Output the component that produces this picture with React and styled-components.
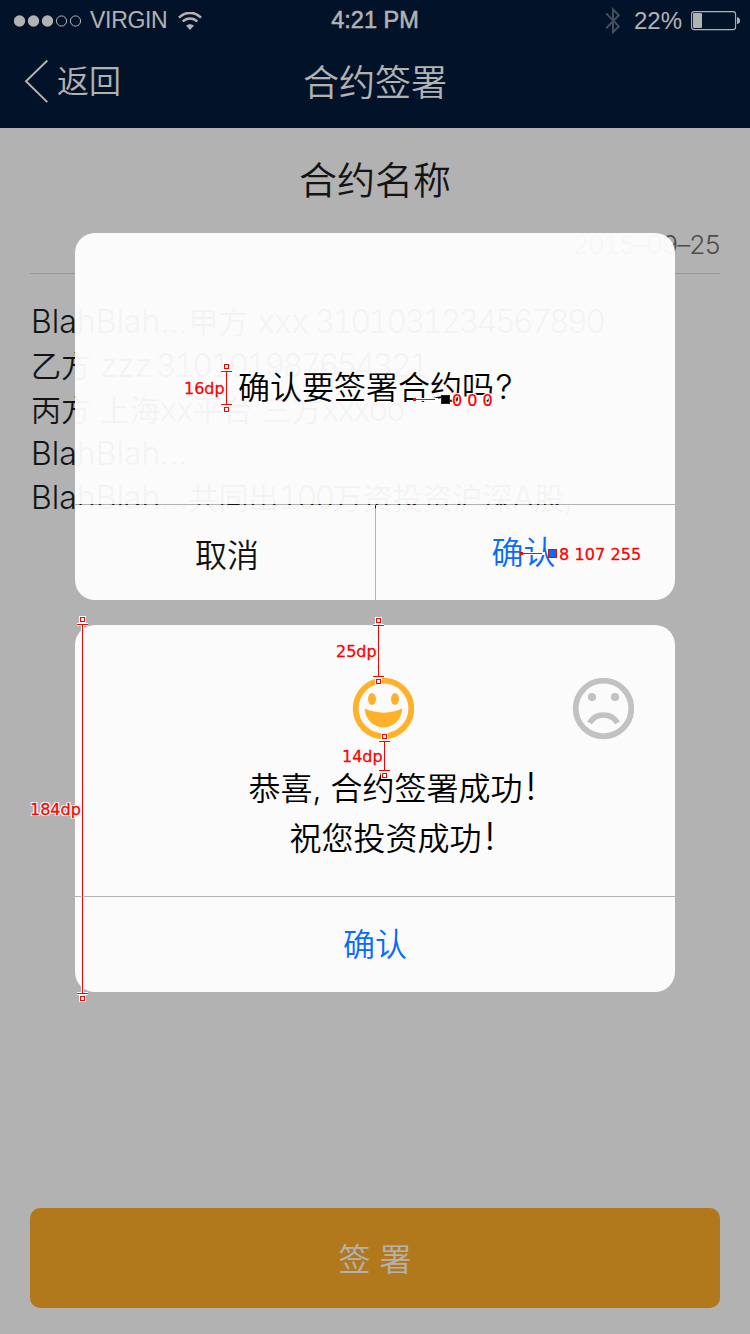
import React from "react";
import styled, { createGlobalStyle } from "styled-components";

const GlobalStyle = createGlobalStyle`
  * { box-sizing: border-box; }
  body { margin: 0; background: #fff; }
  button { border: 0; padding: 0; background: none; font: inherit; }
`;

const Screen = styled.div`
  position: relative;
  width: 750px;
  height: 1334px;
  overflow: hidden;
  background: #fff;
  color: #1e1e1e;
  font-family: Inter, "Noto Sans CJK SC", sans-serif;
  font-weight: 350;
`;

const Page = styled.div`
  height: 100%;
  display: flex;
  flex-direction: column;
`;

const Header = styled.header`
  height: 128px;
  flex: none;
  background: #031a3a;
  color: #fff;
`;

const StatusBar = styled.div`
  height: 41px;
  padding: 0 9px 0 14px;
  display: grid;
  grid-template-columns: 1fr auto 1fr;
  align-items: center;
  font-family: "Liberation Sans", sans-serif;
  font-weight: 400;
  font-size: 24px;
`;

const StatusGroup = styled.div`
  display: flex;
  align-items: center;
  justify-content: ${(p) => (p.$end ? "flex-end" : "flex-start")};
`;

const StatusText = styled.span`
  font-size: ${(p) => p.$size || 24}px;
  letter-spacing: ${(p) => p.$spacing || 0}px;
  line-height: 41px;
  height: 41px;
  margin: ${(p) => p.$margin || 0};
  -webkit-text-stroke: ${(p) => (p.$strong ? "0.5px #fff" : "0")};
`;

const NavBar = styled.div`
  height: 82px;
  padding: 0 24px;
  display: grid;
  grid-template-columns: 1fr auto 1fr;
  align-items: center;
`;

const BackButton = styled.button`
  display: flex;
  align-items: center;
  gap: 9px;
  color: #fff;
  font-size: 32px;
  line-height: 44px;
`;

const NavTitle = styled.h1`
  margin: 0;
  padding-top: 2px;
  font-size: 36px;
  font-weight: 350;
  line-height: 50px;
`;

const Article = styled.main`
  flex: 1;
  padding: 0 30px;
`;

const ContractTitle = styled.h2`
  margin: 24px 0 0;
  font-size: 38px;
  font-weight: 350;
  line-height: 56px;
  text-align: center;
`;

const DateLine = styled.div`
  height: 66px;
  padding-top: 19px;
  border-bottom: 1px solid #dadada;
  color: #6e6e6e;
  font-size: 26px;
  line-height: 36px;
  font-variant-numeric: tabular-nums;
  letter-spacing: -1.3px;
  text-align: right;
`;

const Terms = styled.div`
  padding-top: 26px;
`;

const TermLine = styled.p`
  margin: 0;
  height: 44px;
  padding-left: 1px;
  font-size: 32px;
  line-height: 44px;
  white-space: pre;
`;

const Han = styled.span`
  margin-left: ${(p) => p.$shift || 0}px;
  font-size: 30px;
`;

const Latin = styled.span`
  letter-spacing: ${(p) => p.$spacing}px;
`;

const Digits = styled.span`
  margin-left: ${(p) => p.$shift || 0}px;
  font-variant-numeric: tabular-nums;
  letter-spacing: -2.65px;
`;

const SignButton = styled.button`
  flex: none;
  height: 100px;
  margin: 0 30px 26px;
  padding-bottom: 3px;
  border-radius: 10px;
  background: #ffae29;
  color: #fff;
  font-size: 32px;
`;

const Overlay = styled.div`
  position: absolute;
  inset: 0;
  padding: 233px 75px 0;
  display: flex;
  flex-direction: column;
  gap: 25px;
  background: rgba(0, 0, 0, 0.3);
`;

const Dialog = styled.section`
  height: 367px;
  display: flex;
  flex-direction: column;
  gap: 1px;
  border-radius: 20px;
  overflow: hidden;
  color: #000;
  font-size: 32px;
`;

const DialogBody = styled.div`
  height: 271px;
  background: rgba(255, 255, 255, 0.95);
  padding: ${(p) => p.$padding};
`;

const Message = styled.p`
  display: flex;
  align-items: baseline;
  margin: 0;
  height: 50px;
  line-height: 50px;
  white-space: pre;
  padding-left: ${(p) => p.$indent}px;
`;

const Mark = styled.span`
  margin-left: ${(p) => p.$shift}px;
  font-size: ${(p) => p.$size}px;
  line-height: 32px;
`;

const Faces = styled.div`
  display: flex;
  gap: 158px;
  margin-left: 277px;
  height: 86px;
`;

const Actions = styled.div`
  flex: 1;
  display: flex;
  gap: 1px;
`;

const Action = styled.button`
  flex: ${(p) => p.$basis || "1"};
  padding: ${(p) => p.$padding || 0};
  background: rgba(255, 255, 255, 0.95);
  color: ${(p) => (p.$primary ? "#086bff" : "#111")};
`;

const MeasureLayer = styled.svg`
  position: absolute;
  left: 0;
  top: 0;
  pointer-events: none;
`;

const MeasureLabel = styled.span`
  position: absolute;
  left: ${(p) => p.$x}px;
  top: ${(p) => p.$y}px;
  color: #f00;
  font-family: "DejaVu Sans", sans-serif;
  font-weight: 400;
  font-size: 16px;
  line-height: 20px;
  letter-spacing: ${(p) => p.$spacing || 0}px;
  -webkit-text-stroke: 0.3px #f00;
  white-space: pre;
  text-shadow: 1px 0 #fff, -1px 0 #fff, 0 1px #fff, 0 -1px #fff, 1px 1px #fff,
    -1px -1px #fff, 1px -1px #fff, -1px 1px #fff;
`;

const Signal = () => (
  <svg width="68" height="14" viewBox="0 0 68 14">
    {[5.5, 19.5, 33.5].map((x) => (
      <circle key={x} cx={x} cy="7" r="5.7" fill="#fff" />
    ))}
    {[47.5, 61.5].map((x) => (
      <circle key={x} cx={x} cy="7" r="5.1" fill="none" stroke="#fff" strokeWidth="1" />
    ))}
  </svg>
);

const Wifi = () => (
  <svg width="24" height="18" viewBox="0 0 24 18" fill="none" stroke="#fff">
    <path d="M1 5.6C7.2-.7 16.8-.7 23 5.6" strokeWidth="2.6" />
    <path d="M4.6 9.5c4.3-4.1 10.5-4.1 14.8 0" strokeWidth="2.4" />
    <path d="M12 18 8.1 13.7c2.3-2 5.5-2 7.8 0z" fill="#fff" stroke="none" />
  </svg>
);

const Bluetooth = () => (
  <svg width="16" height="28" viewBox="0 0 16 28" fill="none" stroke="#fff" strokeWidth="2" opacity=".38">
    <path d="M1.2 6.4 13.8 19.4 8 25.2V2.4l5.8 5.9L1.2 21.3" />
  </svg>
);

const Battery = () => (
  <svg width="50" height="20" viewBox="0 0 50 20">
    <rect x=".6" y=".6" width="44" height="18" rx="2.6" fill="none" stroke="#fff" strokeWidth="1.1" />
    <rect x="2" y="2" width="9" height="15" rx="1" fill="#fff" />
    <path d="M46 6.3c1.9 0 3 1.3 3 3.3s-1.1 3.4-3 3.4z" fill="#fff" />
  </svg>
);

const BackArrow = () => (
  <svg width="24" height="44" viewBox="0 0 24 44" fill="none" stroke="#fff" strokeWidth="2">
    <path d="M23.3.5 2 21.3l21.3 20.8" />
  </svg>
);

const HappyFace = () => (
  <svg width="62" height="62" viewBox="0 0 62 62" fill="#ffb129">
    <circle cx="31.5" cy="30.5" r="27.8" fill="none" stroke="#ffb129" strokeWidth="5.8" />
    <ellipse cx="20" cy="21" rx="4" ry="6" />
    <ellipse cx="43" cy="21" rx="4" ry="6" />
    <path d="M12.6 30.6c11.5 5.4 26.3 5.4 37.8 0-.8 11.3-9 18.8-18.9 18.8s-18.1-7.5-18.9-18.8z" />
  </svg>
);

const SadFace = () => (
  <svg width="62" height="62" viewBox="0 0 62 62" fill="#c2c2c2">
    <circle cx="31.5" cy="30.5" r="27.8" fill="none" stroke="#c2c2c2" strokeWidth="5.8" />
    <circle cx="20" cy="19" r="4.1" />
    <circle cx="43" cy="19" r="4.1" />
    <path d="M17.5 44.8c6.2-10.5 21.8-10.5 28 0" fill="none" stroke="#c2c2c2" strokeWidth="5.6" />
  </svg>
);

const spans = [
  { x: 226.5, top: 371.5, bottom: 404.5, from: 366.5, to: 409.5 },
  { x: 378.5, top: 625.5, bottom: 676.5, from: 620.5, to: 681.5 },
  { x: 384.5, top: 741.5, bottom: 770.5, from: 736.5, to: 775.5 },
  { x: 82.5, top: 624.5, bottom: 993.5, from: 619.5, to: 998.5 },
];

const pointers = [
  { x: 414, y: 399, end: 435, box: 441.5, fill: "#000" },
  { x: 521, y: 553, end: 542, box: 548.5, fill: "#086bff" },
];

const Measures = () => (
  <MeasureLayer width="750" height="1334" viewBox="0 0 750 1334" fill="none" shapeRendering="crispEdges">
    {spans.map((s) => {
      const line = `M${s.x} ${s.top}V${s.bottom}M${s.x - 5.5} ${s.top}h11M${s.x - 5.5} ${s.bottom}h11`;
      return (
        <g key={s.x}>
          <path d={line} stroke="#fff" strokeWidth="3" />
          <path d={line} stroke="#f00" strokeWidth="1" />
          {[s.from, s.to].map((y) => (
            <g key={y}>
              <rect x={s.x - 3.5} y={y - 3.5} width="7" height="7" fill="#fff" />
              <rect x={s.x - 2} y={y - 2} width="4" height="4" stroke="#f00" fill="#fff" />
            </g>
          ))}
        </g>
      );
    })}
    {pointers.map((p) => (
      <g key={p.y}>
        <path d={`M${p.x} ${p.y + 0.5}H${p.end + 3}`} stroke="#fff" strokeWidth="3" />
        <path d={`M${p.x} ${p.y + 0.5}H${p.end}`} stroke="#f00" />
        <rect x={p.x - 1} y={p.y - 1} width="3" height="3" fill="#f00" />
        <rect x={p.box - 0.5} y={p.y - 4} width="9" height="9" fill={p.fill === "#000" ? "#700" : "#f00"} />
        <rect x={p.box + 0.5} y={p.y - 3} width="7" height="7" fill={p.fill} />
      </g>
    ))}
  </MeasureLayer>
);

export default function App() {
  return (
    <Screen>
      <GlobalStyle />
      <Page>
        <Header>
          <StatusBar>
            <StatusGroup>
              <Signal />
              <StatusText $size={23} $spacing={-0.3} $margin="0 11px 0 8px">VIRGIN</StatusText>
              <Wifi />
            </StatusGroup>
            <StatusText $size={23.5} $margin="0 5px 0 0" $strong>4:21 PM</StatusText>
            <StatusGroup $end>
              <Bluetooth />
              <StatusText $margin="0 9px 0 13px">22%</StatusText>
              <Battery />
            </StatusGroup>
          </StatusBar>
          <NavBar>
            <BackButton>
              <BackArrow />
              返回
            </BackButton>
            <NavTitle>合约签署</NavTitle>
          </NavBar>
        </Header>
        <Article>
          <ContractTitle>合约名称</ContractTitle>
          <DateLine>2015–09–25</DateLine>
          <Terms>
            <TermLine>BlahBlah...<Han $shift={1}>甲方</Han> xxx <Digits $shift={-3}>3101031234567890</Digits></TermLine>
            <TermLine><Han>乙方</Han> zzz <Digits $shift={-5}>310101987654321</Digits></TermLine>
            <TermLine><Han>丙方</Han> <Han>上海</Han><Latin $spacing={-0.6}>xx</Latin><Han>平台</Han> <Han>三方</Han><Latin $spacing={-1.1}>xxxoo</Latin></TermLine>
            <TermLine>BlahBlah...</TermLine>
            <TermLine>BlahBlah...<Han $shift={1}>共同出</Han><Digits>100</Digits><Han>万资投资沪深</Han>A<Han>股</Han>,</TermLine>
          </Terms>
        </Article>
        <SignButton>签 署</SignButton>
      </Page>
      <Overlay>
        <Dialog>
          <DialogBody $padding="130px 0 0">
            <Message $indent={163}>确认要签署合约吗<Mark $size={34} $shift={1.5}>?</Mark></Message>
          </DialogBody>
          <Actions>
            <Action $basis="0 0 300px" $padding="0 0 0 4px">取消</Action>
            <Action $primary $padding="0 4px 5px 0">确认</Action>
          </Actions>
        </Dialog>
        <Dialog>
          <DialogBody $padding="53px 0 0">
            <Faces>
              <HappyFace />
              <SadFace />
            </Faces>
            <Message $indent={173.5}>恭喜, 合约签署成功<Mark $size={38} $shift={3}>!</Mark></Message>
            <Message $indent={214.5}>祝您投资成功<Mark $size={38} $shift={3}>!</Mark></Message>
          </DialogBody>
          <Actions>
            <Action $primary $padding="0 0 5px">确认</Action>
          </Actions>
        </Dialog>
      </Overlay>
      <Measures />
      <MeasureLabel $x={184} $y={379}>16dp</MeasureLabel>
      <MeasureLabel $x={336} $y={642}>25dp</MeasureLabel>
      <MeasureLabel $x={342} $y={747}>14dp</MeasureLabel>
      <MeasureLabel $x={30} $y={800}>184dp</MeasureLabel>
      <MeasureLabel $x={452} $y={391}>0 0 0</MeasureLabel>
      <MeasureLabel $x={559} $y={545} $spacing={0.1}>8 107 255</MeasureLabel>
    </Screen>
  );
}
